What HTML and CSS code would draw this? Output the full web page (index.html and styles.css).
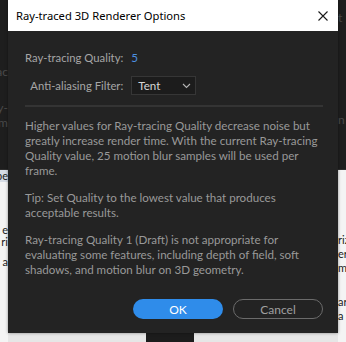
FILE: index.html
```
<!DOCTYPE html>
<html>
<head>
<meta charset="utf-8">
<link rel="stylesheet" href="styles.css">
</head>
<body>
<div class="app">
  <div class="app-top">
    <div class="side side-left">
      <span class="frag f1">Mac</span>
      <span class="frag f2">Ray-</span>
      <span class="frag f3">Tim</span>
    </div>
    <div class="side-gap"></div>
    <div class="side side-right">
      <span class="frag f0">t</span>
      <span class="frag f4">n</span>
    </div>
  </div>
  <div class="app-bottom">
    <div class="side side-left light">
      <span class="lfrag sel">be</span>
      <span class="lfrag l1">e</span>
      <span class="lfrag">ri</span>
      <span class="lfrag l2">a</span>
    </div>
    <div class="bottom-mid">
      <div class="dark-block"></div>
    </div>
    <div class="side side-right light">
      <span class="rfrag r1">riz</span>
      <span class="rfrag">er</span>
      <span class="rfrag">m</span>
      <span class="rfrag r2">ar</span>
      <span class="rfrag">a</span>
    </div>
  </div>
</div>

<div class="dialog">
  <div class="titlebar">
    <span class="title">Ray-traced 3D Renderer Options</span>
    <svg class="close" width="10" height="10" viewBox="0 0 10 10"><path d="M0.5 0.5 L9.5 9.5 M9.5 0.5 L0.5 9.5" stroke="#1a1a1a" stroke-width="1.1" fill="none"/></svg>
  </div>
  <div class="content">
    <div class="form">
      <span class="label">Ray-tracing Quality:</span>
      <span class="value">5</span>
      <span class="label">Anti-aliasing Filter:</span>
      <div class="select">
        <span class="select-text">Tent</span>
        <svg width="9" height="6" viewBox="0 0 9 6"><path d="M1 1 L4.5 4.5 L8 1" stroke="#b5b5b5" stroke-width="1.1" fill="none"/></svg>
      </div>
    </div>
    <div class="sep"></div>
    <p class="para p1">Higher values for Ray-tracing Quality decrease noise but greatly increase render time. With the current Ray-tracing Quality value, 25 motion blur samples will be used per frame.</p>
    <p class="para">Tip: Set Quality to the lowest value that produces acceptable results.</p>
    <p class="para">Ray-tracing Quality 1 (Draft) is not appropriate for evaluating some features, including depth of field, soft shadows, and motion blur on 3D geometry.</p>
    <div class="buttons">
      <button class="btn btn-ok">OK</button>
      <button class="btn btn-cancel">Cancel</button>
    </div>
  </div>
</div>
</body>
</html>
```

FILE: styles.css
```
html, body {
  margin: 0;
  padding: 0;
}
body {
  width: 346px;
  height: 342px;
  overflow: hidden;
  position: relative;
  font-family: "Lato", "Liberation Sans", sans-serif;
  background: #1d1d1d;
}
.app {
  display: flex;
  flex-direction: column;
  width: 346px;
  height: 342px;
}
.app-top {
  height: 170px;
  display: flex;
  background: #1e1e1e;
  border-bottom: 1px solid #2e2e2e;
  box-sizing: border-box;
}
.side {
  width: 8px;
  display: flex;
  flex-direction: column;
  overflow: hidden;
  font-size: 12px;
  line-height: 12px;
}
.side-gap { flex: 1; }
.side-left { align-items: flex-end; }
.side-right { align-items: flex-start; }
.frag { color: #4a4a4a; white-space: nowrap; }
.f0 { margin-top: 12px; }
.f1 { margin-top: 66px; }
.f2 { margin-top: 24px; }
.f3 { margin-top: 3px; }
.f4 { margin-top: 90px; }
.app-bottom {
  flex: 1;
  display: flex;
  background: #e6e6e6;
}
.light { background: #f4f4f4; }
.lfrag, .rfrag {
  color: #222;
  white-space: nowrap;
  font-size: 11px;
  line-height: 12px;
}
.sel { background: #d7dde6; margin-top: 0; }
.l1 { margin-top: 42px; }
.l2 { margin-top: 8px; }
.r1 { margin-top: 64px; }
.rfrag + .rfrag { margin-top: 2px; }
.rfrag.r2 { margin-top: 22px; }
.bottom-mid {
  flex: 1;
  display: flex;
  align-items: flex-end;
  padding-left: 138px;
}
.dark-block {
  width: 48px;
  height: 9px;
  background: #1c1c1c;
}

.dialog {
  position: absolute;
  left: 8px;
  top: 0;
  width: 330px;
  height: 333px;
  background: #232323;
  display: flex;
  flex-direction: column;
  box-shadow: 0 0 3px rgba(0,0,0,0.4);
}
.titlebar {
  height: 31px;
  background: #ffffff;
  display: flex;
  align-items: center;
  justify-content: space-between;
  padding: 0 10px 0 8px;
  flex-shrink: 0;
}
.title {
  font-family: "Noto Sans", "Liberation Sans", sans-serif;
  font-size: 11.2px;
  color: #000;
}
.close { display: block; }
.content {
  flex: 1;
  display: flex;
  flex-direction: column;
  padding: 17px 15px 14px 17px;
}
.form {
  display: grid;
  grid-template-columns: auto auto;
  grid-auto-rows: 19px;
  column-gap: 8px;
  row-gap: 9px;
  align-items: center;
  justify-content: start;
}
.label {
  justify-self: end;
  white-space: nowrap;
  color: #a6a6a6;
  font-size: 11.3px;
}
.value {
  color: #4b8fe0;
  font-size: 11.6px;
}
.select {
  width: 65px;
  height: 19px;
  box-sizing: border-box;
  border: 1px solid #363636;
  background: #1c1c1c;
  display: flex;
  align-items: center;
  justify-content: space-between;
  padding: 0 4px 0 6px;
}
.select-text {
  color: #d6d6d6;
  font-size: 11.6px;
}
.sep {
  height: 2px;
  background: #343434;
  margin-top: 10px;
}
.para {
  margin: 12px 0 0 0;
  color: #999999;
  font-size: 11.6px;
  line-height: 15px;
}
.para.p1 { margin-top: 11px; }
.buttons {
  margin-top: auto;
  display: flex;
  justify-content: flex-end;
  gap: 10px;
}
.btn {
  width: 90px;
  height: 20px;
  border-radius: 10px;
  font-family: "Lato", "Liberation Sans", sans-serif;
  font-size: 12px;
  padding: 0;
  box-sizing: border-box;
}
.btn-ok {
  background: #2f8cea;
  border: none;
  color: #ffffff;
}
.btn-cancel {
  background: transparent;
  border: 1px solid #6b6b6b;
  color: #a0a0a0;
}
```
